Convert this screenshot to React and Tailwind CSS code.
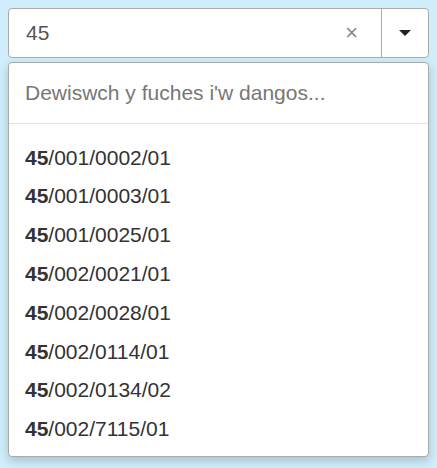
import React from 'react';

const items = [
  '/001/0002/01',
  '/001/0003/01',
  '/001/0025/01',
  '/002/0021/01',
  '/002/0028/01',
  '/002/0114/01',
  '/002/0134/02',
  '/002/7115/01',
];

const App = () => {
  return (
    <div
      className="min-h-[468px] w-[437px] bg-[#cfedfb] p-2"
      style={{ fontFamily: '"Liberation Sans", Arial, sans-serif' }}
    >
      {/* select box */}
      <div className="flex h-[50px] rounded border border-[#aaaaaa] bg-white">
        <div className="flex flex-1 items-center pl-[17px] pr-[23px] text-[21px] text-[#555]">
          <span className="flex-1">45</span>
          <span className="text-[22px] leading-none text-[#888]">×</span>
        </div>
        <div className="flex w-[47px] items-center justify-center border-l border-[#aaaaaa]">
          <svg width="12" height="7" viewBox="0 0 12 7">
            <path d="M0 0h12L6 6z" fill="#222" />
          </svg>
        </div>
      </div>

      {/* dropdown */}
      <div className="mt-1 rounded border border-[#aaaaaa] bg-white shadow-[0_4px_10px_rgba(0,0,0,0.18)]">
        <div className="flex h-[60px] items-center px-4 text-[21px] text-[#777]">
          Dewiswch y fuches i'w dangos...
        </div>
        <div className="border-t border-[#e2e2e2] pt-[14px] pb-[8px]">
          {items.map((it) => (
            <div key={it} className="flex h-[38.8px] items-center px-4 text-[21px] text-[#333]">
              <span className="font-bold">45</span>
              <span>{it}</span>
            </div>
          ))}
        </div>
      </div>
    </div>
  );
};

export default App;
